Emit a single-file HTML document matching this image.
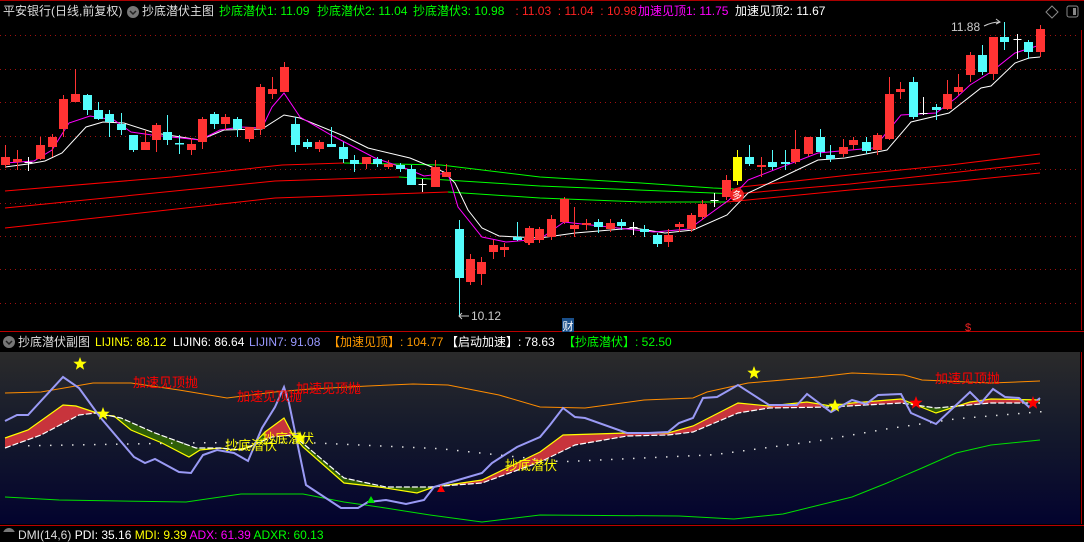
<!DOCTYPE html>
<html><head><meta charset="utf-8">
<style>
html,body{margin:0;padding:0;background:#000;}
body{width:1084px;height:532px;overflow:hidden;position:relative;font-family:"Liberation Sans","Noto Sans CJK SC",sans-serif;font-size:12px;}
.t{position:absolute;white-space:pre;line-height:14px;}
svg{position:absolute;left:0;top:0;}
</style></head><body>
<svg id="s" width="1084" height="532" viewBox="0 0 1084 532">
<defs>
<linearGradient id="bg" x1="0" y1="0" x2="0" y2="1">
<stop offset="0" stop-color="#2b2b2b"/><stop offset="0.45" stop-color="#151a2c"/><stop offset="1" stop-color="#03032e"/>
</linearGradient>
<clipPath id="gclip">
<rect x="100" y="350" width="165" height="180"/><rect x="295" y="350" width="137" height="180"/>
<rect x="823" y="350" width="24" height="180"/><rect x="904" y="350" width="50" height="180"/><rect x="1024" y="350" width="20" height="180"/>
</clipPath>
</defs>
<rect x="0" y="352" width="1080" height="172" fill="url(#bg)"/>
<line x1="0" y1="0.5" x2="1084" y2="0.5" stroke="#a00" />
<line x1="1081.5" y1="30" x2="1081.5" y2="330" stroke="#a00"/>
<line x1="0" y1="331.5" x2="1084" y2="331.5" stroke="#b00"/>
<line x1="0" y1="525.5" x2="1084" y2="525.5" stroke="#b00"/>
<line x1="1081.5" y1="352" x2="1081.5" y2="524" stroke="#a00"/>
<g id="grid" stroke="#a01010" stroke-dasharray="1,4"></g>
<g id="ma"></g>
<g id="cd"></g>
<g id="low"></g>
<circle cx="737" cy="195" r="7" fill="#e22"/>
<text x="737" y="199" fill="#fff" font-size="10" text-anchor="middle" font-family="Noto Sans CJK SC">多</text>
<rect x="562" y="318" width="12" height="14" fill="#1a4f8a"/>
<text x="568" y="330" fill="#fff" font-size="11" text-anchor="middle" font-family="Noto Sans CJK SC">财</text>
<text x="968" y="331" fill="#e22" font-size="11" text-anchor="middle">$</text>
<path d="M459 316 h10 M462 313 l-3 3 3 3" stroke="#ccc" fill="none"/>
<path d="M984 26 q8 -4 16 -4 M996 19 l4 3 -4 2" stroke="#ccc" fill="none"/>
<path d="M1052 6 l6 6 -6 6 -6 -6z" stroke="#888" fill="none"/>
<rect x="1067" y="6" width="11" height="11" rx="2" stroke="#888" fill="none"/>
<rect x="1073" y="8" width="3" height="7" fill="#888"/>
<circle cx="133" cy="12" r="6" fill="#777"/><path d="M130 11 l3 3 3 -3" stroke="#222" fill="none" stroke-width="1.5"/>
<circle cx="9" cy="342" r="6" fill="#777"/><path d="M6 341 l3 3 3 -3" stroke="#222" fill="none" stroke-width="1.5"/>
<circle cx="9" cy="534" r="6" fill="#777"/>
</svg>
<div class="t" style="left:3px;top:4px;color:#ddd">平安银行(日线,前复权)</div>
<div class="t" style="left:142px;top:4px;color:#ddd">抄底潜伏主图</div>
<div class="t" style="left:219px;top:4px;color:#0f0">抄底潜伏1: 11.09</div>
<div class="t" style="left:317px;top:4px;color:#0f0">抄底潜伏2: 11.04</div>
<div class="t" style="left:413px;top:4px;color:#0f0">抄底潜伏3: 10.98</div>
<div class="t" style="left:512px;top:4px;color:#f22"> : 11.03  : 11.04  : 10.98</div>
<div class="t" style="left:638px;top:4px;color:#f0f">加速见顶1: 11.75</div>
<div class="t" style="left:735px;top:4px;color:#fff">加速见顶2: 11.67</div>
<div class="t" style="left:951px;top:20px;color:#ccc">11.88</div>
<div class="t" style="left:471px;top:309px;color:#ccc">10.12</div>
<div class="t" style="left:18px;top:335px;color:#ddd">抄底潜伏副图</div>
<div class="t" style="left:95px;top:335px;color:#ff0">LIJIN5: 88.12</div>
<div class="t" style="left:173px;top:335px;color:#fff">LIJIN6: 86.64</div>
<div class="t" style="left:249px;top:335px;color:#99f">LIJIN7: 91.08</div>
<div class="t" style="left:328px;top:335px;color:#f90">【加速见顶】: 104.77</div>
<div class="t" style="left:446px;top:335px;color:#fff">【启动加速】: 78.63</div>
<div class="t" style="left:563px;top:335px;color:#0f0">【抄底潜伏】: 52.50</div>
<div class="t" style="left:18px;top:528px;color:#ddd">DMI(14,6) <span style="color:#fff">PDI: 35.16</span> <span style="color:#ff0">MDI: 9.39</span> <span style="color:#f0f">ADX: 61.39</span> <span style="color:#0f0">ADXR: 60.13</span></div>
<div class="t" style="left:133px;top:376px;color:#f00;font-size:13px">加速见顶抛</div>
<div class="t" style="left:237px;top:390px;color:#f00;font-size:13px">加速见顶抛</div>
<div class="t" style="left:296px;top:382px;color:#f00;font-size:13px">加速见顶抛</div>
<div class="t" style="left:935px;top:372px;color:#f00;font-size:13px">加速见顶抛</div>
<div class="t" style="left:225px;top:439px;color:#ff0;font-size:13px">抄底潜伏</div>
<div class="t" style="left:262px;top:432px;color:#ff0;font-size:13px">抄底潜伏</div>
<div class="t" style="left:505px;top:459px;color:#ff0;font-size:13px">抄底潜伏</div>
<script>
var NS="http://www.w3.org/2000/svg";
function el(p,t,a){var e=document.createElementNS(NS,t);for(var k in a)e.setAttribute(k,a[k]);document.getElementById(p).appendChild(e);return e;}
function pl(p,pts,c,w,extra){var a={points:pts.map(function(q){return q.join(",")}).join(" "),fill:"none",stroke:c,"stroke-width":w||1};for(var k in extra)a[k]=extra[k];return el(p,"polyline",a);}
[35,69,102,136,169,203,236,269,303].forEach(function(y){el("grid","line",{x1:0,y1:y+.5,x2:1080,y2:y+.5});});
pl("ma",[[5,191],[172,177],[282,165],[344,163]],"#f00");
pl("ma",[[344,163],[441,165],[540,177],[641,183],[713,188],[735,189]],"#0f0");
pl("ma",[[735,189],[741,187],[850,175],[950,165],[1040,154]],"#f00");
pl("ma",[[5,208],[275,181],[399,177]],"#f00");
pl("ma",[[399,177],[540,186],[713,193],[735,194]],"#0f0");
pl("ma",[[735,194],[850,184],[950,173],[1040,163]],"#f00");
pl("ma",[[5,228],[275,198],[448,192]],"#f00");
pl("ma",[[448,192],[540,198],[641,202],[727,202]],"#0f0");
pl("ma",[[727,202],[850,190],[950,182],[1040,173]],"#f00");
pl("ma",[[5,167],[28,164],[45,161],[62,153],[86,127],[103,122],[124,123],[155,133],[200,140],[224,130],[262,129],[284,115],[300,118],[344,136],[368,148],[410,158],[444,172],[455,183],[468,210],[482,228],[499,236],[540,238],[575,233],[634,228],[665,233],[693,230],[727,215],[748,193],[776,180],[818,160],[845,158],[887,150],[911,122],[949,113],[981,88],[991,86],[1015,63],[1029,58],[1040,57]],"#fff");
pl("ma",[[5,163],[34,161],[52,150],[69,123],[90,116],[114,120],[131,132],[152,135],[200,140],[220,130],[241,127],[262,128],[272,107],[284,93],[300,117],[331,135],[375,158],[410,170],[424,176],[448,173],[458,207],[482,237],[506,242],[540,239],[564,222],[654,232],[689,229],[729,200],[748,180],[818,153],[873,148],[883,137],[901,115],[936,113],[956,98],[970,85],[991,72],[1015,53],[1040,45]],"#f0f");
var A=[[5,157,165,'r',145,168],[16,159,162,'r',150,170],[27,162,162,'x',157,171],[39,145,159,'r',137,160],[50,137,147,'r',134,157],[61,99,129,'r',95,137],[73,94,102,'r',69,102],[84,95,110,'c',94,115],[95,110,119,'c',102,120],[106,114,122,'c',110,137],[117,124,130,'c',113,135],[129,135,150,'c',135,152],[140,142,150,'r',130,150],[151,125,140,'r',123,152],[162,132,140,'c',115,145],[173,143,144,'c',135,154],[185,144,150,'r',138,155],[196,119,142,'r',117,149],[207,114,124,'c',112,129],[218,117,124,'r',114,130],[229,119,129,'c',117,137],[241,127,139,'r',127,142],[252,87,129,'r',84,135],[263,89,94,'r',77,99],[275,67,92,'r',62,92],[286,124,145,'c',117,152],[297,142,147,'c',139,149],[309,142,149,'r',140,152],[320,144,147,'c',127,147],[332,147,159,'c',142,163],[343,160,164,'c',155,172],[354,157,164,'r',157,169],[365,159,164,'c',157,167],[376,164,167,'r',160,169],[387,165,169,'c',163,172],[398,169,185,'c',165,185],[409,184,184,'x',179,192],[421,167,187,'r',160,187],[432,172,177,'r',164,177],[444,229,278,'c',220,317],[455,259,282,'r',254,285],[466,262,274,'r',257,285],[477,245,252,'r',240,259],[488,247,250,'r',243,257],[500,237,240,'c',222,241],[511,237,242,'r',234,245],[522,229,240,'r',227,243]];
var B=[[529,228,243,'r',226,245],[551,219,237,'r',215,240],[563,199,222,'r',197,224],[573,225,229,'r',207,237],[584,223,225,'r',219,230],[596,222,227,'c',219,233],[607,223,229,'r',219,232],[618,222,226,'c',219,230],[629,227,227,'x',222,235],[640,229,232,'c',225,237],[652,235,244,'c',233,247],[663,235,242,'r',229,247],[674,224,227,'r',222,232],[685,215,229,'r',213,232],[696,204,217,'r',200,220],[707,200,200,'x',193,207],[719,180,197,'r',175,200],[729,157,181,'y',150,185],[741,157,164,'c',145,166],[752,165,167,'r',157,177],[763,162,167,'c',150,170],[775,162,164,'c',150,170],[785,149,162,'r',130,164],[797,137,154,'r',137,156],[809,137,152,'c',129,157],[819,155,159,'c',145,162],[831,147,154,'r',139,157],[841,140,145,'r',137,150],[853,142,151,'c',137,154],[864,135,150,'r',133,155],[875,94,139,'r',77,140],[886,89,92,'r',82,99],[898,82,117,'c',77,119],[908,113,113,'x',97,115],[920,107,110,'c',104,120],[931,94,109,'r',80,110],[942,87,92,'r',74,95],[953,55,75,'r',52,82],[965,55,72,'c',45,75],[975,37,74,'r',37,80],[986,37,42,'c',22,50],[998,39,39,'x',34,59],[1009,42,52,'c',40,59],[1020,29,52,'r',25,57]];
var col={r:'#ff3333',c:'#54fcfc',x:'#ffffff',y:'#ffff00'};
function cand(x,t,b,c,wt,wb){var C=col[c];x=Math.round(x)+.5;el("cd","line",{x1:x,y1:wt,x2:x,y2:wb,stroke:C});
 if(c=='x'){el("cd","line",{x1:x-4,y1:t+.5,x2:x+4,y2:t+.5,stroke:C});}
 else el("cd","rect",{x:x-4.5,y:t,width:9,height:Math.max(b-t,1.5),fill:C});}
A.forEach(function(d){cand(d[0]*1.033,d[1],d[2],d[3],d[4],d[5]);});
B.forEach(function(d){cand(540+(d[0]-540)*1.041,d[1],d[2],d[3],d[4],d[5]);});
pl("low",[[5,393],[41,392],[93,383],[131,383],[179,390],[227,398],[275,392],[310,389],[368,386],[413,384],[448,385],[499,395],[540,407],[585,408],[644,400],[693,398],[707,392],[748,383],[818,377],[852,373],[904,375],[922,380],[991,383],[1040,381]],"#ff8c00");
pl("low",[[5,497],[59,500],[186,502],[241,494],[303,494],[344,502],[379,507],[430,515],[482,522],[540,515],[679,516],[734,519],[783,514],[852,497],[887,483],[922,468],[956,453],[991,445],[1040,440]],"#00e000");
var up=[[5,438],[28,430],[63,405],[76,406],[103,415],[114,416],[131,430],[162,443],[189,457],[200,450],[220,448],[234,450],[251,447],[265,432],[284,418],[293,435],[303,447],[344,483],[379,487],[417,493],[434,487],[482,480],[540,452],[563,435],[627,433],[668,433],[693,426],[738,403],[769,406],[807,402],[831,406],[852,403],[901,399],[936,413],[970,402],[991,399],[1040,400]];
var lo=[[5,448],[41,435],[79,415],[96,413],[121,418],[155,433],[196,448],[220,448],[241,450],[272,437],[293,435],[344,478],[386,487],[430,487],[482,483],[540,462],[575,445],[627,436],[668,435],[693,432],[738,413],[769,408],[831,407],[901,403],[936,408],[991,403],[1040,403]];
var poly=up.concat(lo.slice().reverse()).map(function(q){return q.join(",")}).join(" ");
el("low","polygon",{points:poly,fill:"#c8343c"});
el("low","polygon",{points:poly,fill:"#2f5f08","clip-path":"url(#gclip)"});
pl("low",up,"#ffff00",1.2);
pl("low",lo,"#ffffff",1.2,{"stroke-dasharray":"6,2"});
var dp=[[28,445],[200,442],[310,442],[440,448],[561,461],[713,454],[818,440],[887,428],[956,418],[1040,411]];
for(var x=28;x<=1040;x+=11){for(var i=0;i<dp.length-1;i++){if(x>=dp[i][0]&&x<=dp[i+1][0]){var f=(x-dp[i][0])/(dp[i+1][0]-dp[i][0]);var y=dp[i][1]+f*(dp[i+1][1]-dp[i][1]);el("low","rect",{x:x,y:y,width:1.5,height:1.5,fill:"#ddd"});break;}}}
pl("low",[[5,421],[17,415],[28,415],[63,377],[79,388],[100,417],[134,457],[145,463],[155,459],[179,472],[191,473],[203,455],[217,450],[234,453],[248,461],[262,428],[275,407],[284,387],[289,403],[306,485],[341,508],[358,508],[368,502],[386,500],[406,504],[424,500],[434,487],[458,480],[482,473],[492,463],[517,447],[540,437],[550,425],[563,408],[575,417],[585,418],[627,433],[648,433],[668,432],[679,423],[693,418],[703,398],[717,397],[738,385],[769,405],[797,405],[807,394],[831,412],[852,400],[866,404],[878,395],[901,394],[911,413],[936,424],[970,392],[981,403],[993,389],[1005,397],[1019,398],[1029,407],[1040,398]],"#9a9af5",2);
function star(cx,cy,r,c){var p=[];for(var i=0;i<10;i++){var a=-Math.PI/2+i*Math.PI/5;var rr=i%2?r*0.42:r;p.push((cx+rr*Math.cos(a)).toFixed(1)+","+(cy+rr*Math.sin(a)).toFixed(1));}el("low","polygon",{points:p.join(" "),fill:c});}
star(80,364,7,"#ff0");star(103,414,7,"#ff0");star(300,438,7,"#ff0");star(754,373,7,"#ff0");star(835,406,7,"#ff0");
star(916,403,7,"#f00");star(1033,403,7,"#f00");
el("low","polygon",{points:"437,492 441,485 445,492",fill:"#f00"});
el("low","polygon",{points:"367,503 371,496 375,503",fill:"#0d0"});
</script>
</body></html>
